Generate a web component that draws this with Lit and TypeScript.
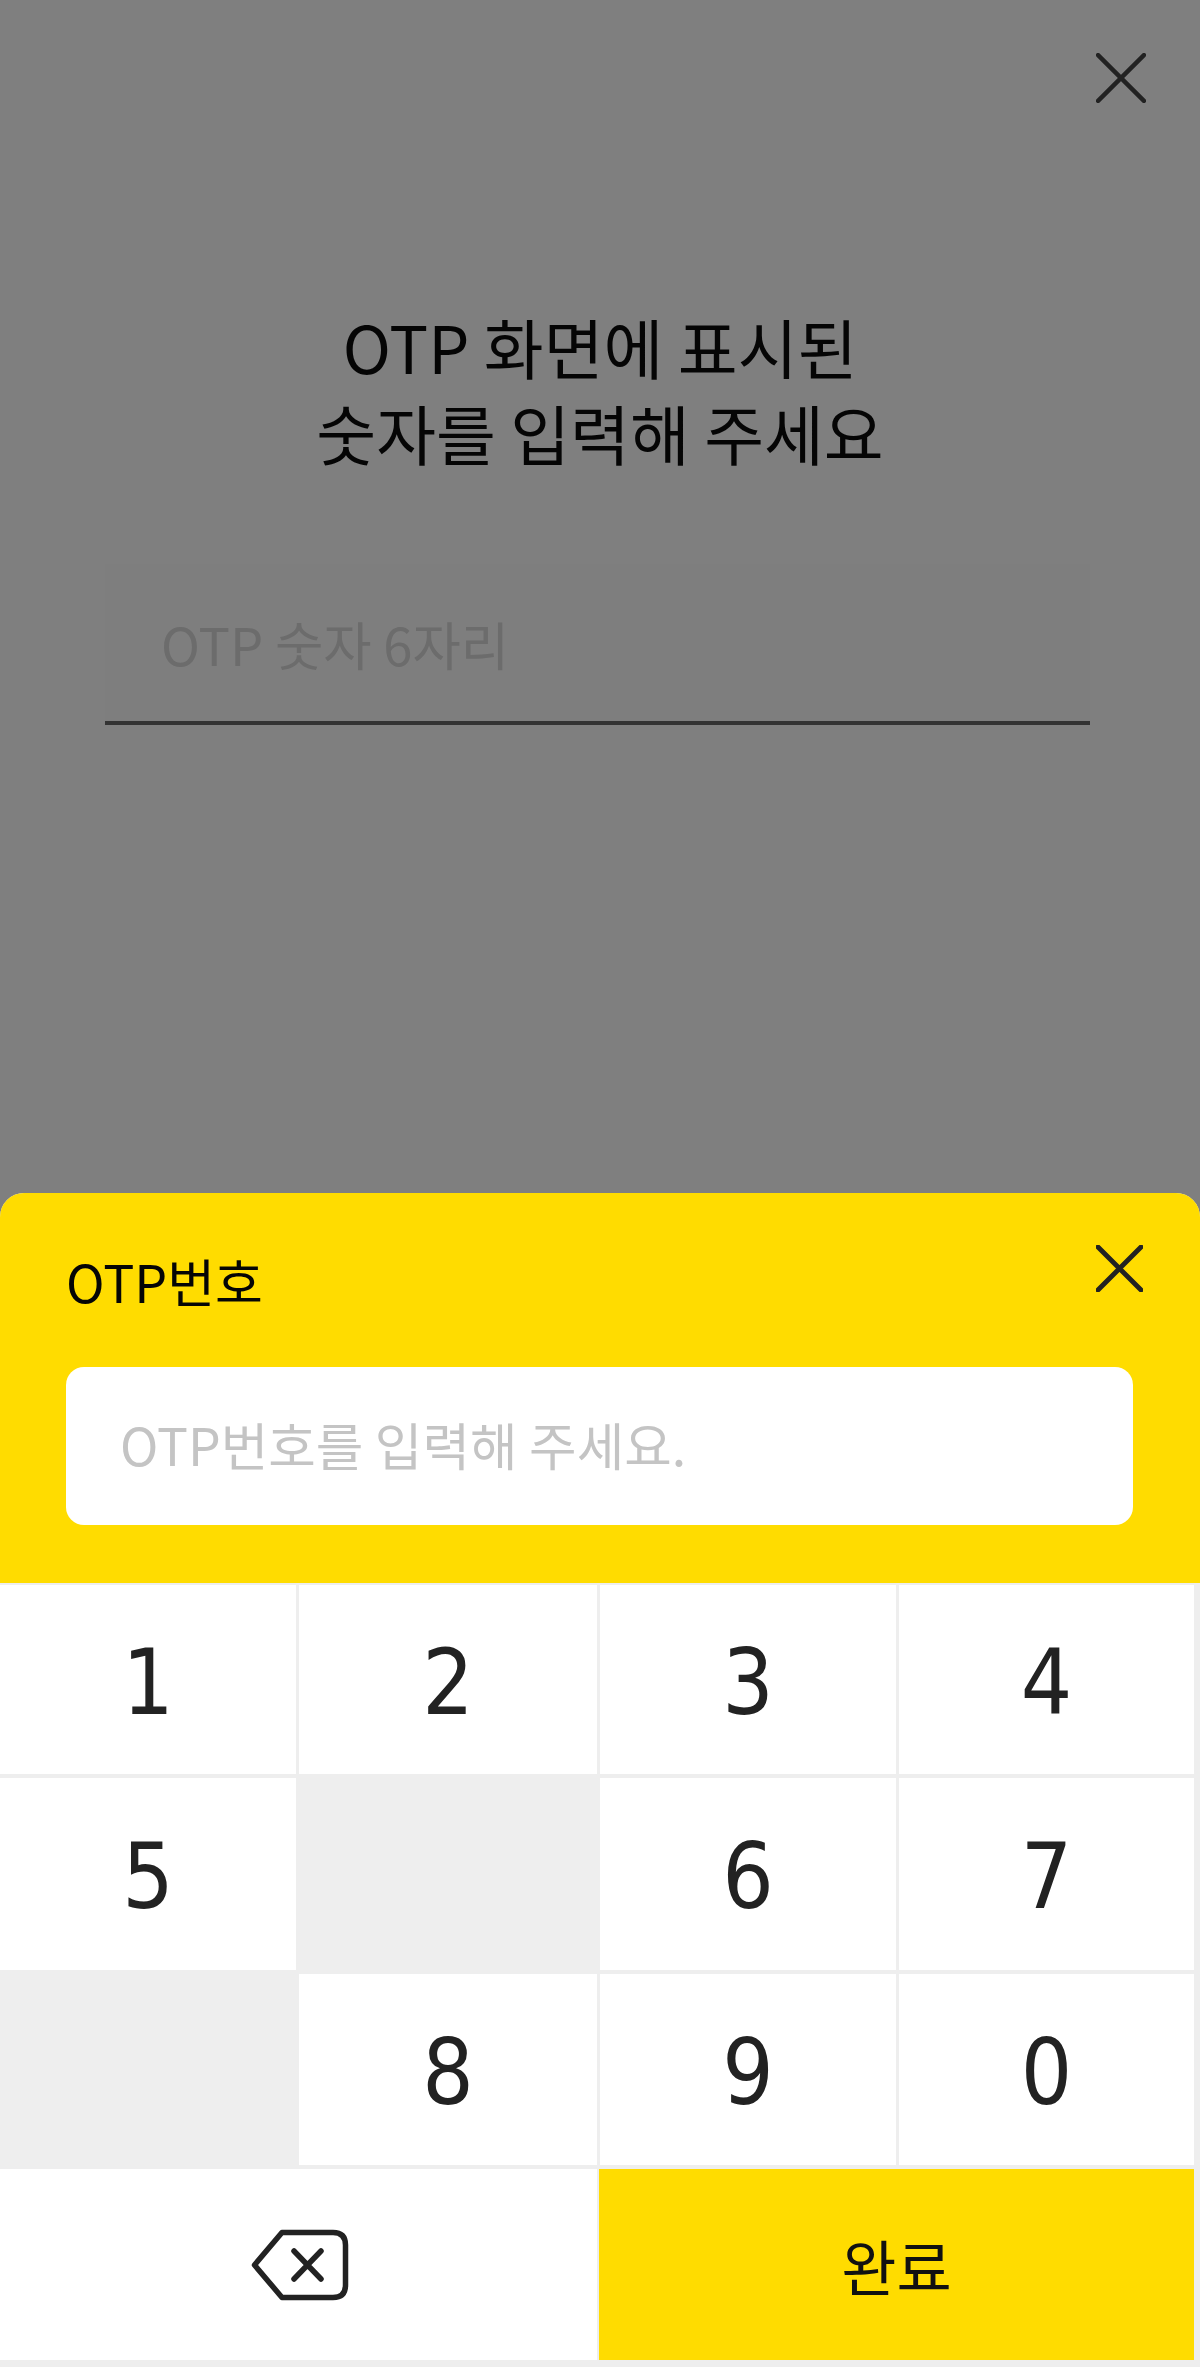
import { LitElement, html, css } from 'lit';
import { customElement } from 'lit/decorators.js';

const closeIcon = (size: number, stroke: number) => html`
  <svg width=${size} height=${size} viewBox="0 0 48 48" fill="none" stroke="#222" stroke-width=${stroke} stroke-linecap="round">
    <path d="M2 2 L46 46 M46 2 L2 46" />
  </svg>
`;

// null = blank key
const KEYS: (string | null)[] = ['1', '2', '3', '4', '5', null, '6', '7', null, '8', '9', '0'];

@customElement('app-root')
export class AppRoot extends LitElement {
  static styles = css`
    :host {
      display: block;
      width: 1200px;
      height: 2367px;
      background: #7f7f7f;
      font-family: 'Noto Sans CJK KR', 'Noto Sans', sans-serif;
      color: #111;
      overflow: hidden;
    }

    .dim {
      height: 1193px;
      box-sizing: border-box;
      display: flex;
      flex-direction: column;
      padding-top: 53px;
    }

    .top-close {
      align-self: flex-end;
      margin-right: 54px;
      height: 50px;
      line-height: 0;
    }

    h1 {
      margin: 200px 0 0;
      font-size: 65px;
      font-weight: 400;
      line-height: 86px;
      text-align: center;
      color: #050505;
    }

    .otp-field {
      margin: 89px 110px 0 105px;
      height: 161px;
      box-sizing: border-box;
      padding-left: 56px;
      display: flex;
      align-items: center;
      background: #7e7e7e;
      border-bottom: 4px solid #333;
      font-size: 52.5px;
      color: #6c6c6c;
    }

    .sheet {
      height: 1174px;
      background: #eeeeee;
      border-radius: 24px 24px 0 0;
      overflow: hidden;
    }

    .yellow {
      height: 390px;
      box-sizing: border-box;
      background: #ffdc00;
      padding: 52px 67px 0 66px;
    }

    .sheet-head {
      display: flex;
      justify-content: space-between;
      align-items: flex-start;
      height: 122px;
    }

    .sheet-title {
      font-size: 52px;
      line-height: 72px;
      color: #050505;
    }

    .sheet-close {
      margin-right: -10px;
      line-height: 0;
    }

    .input {
      height: 158px;
      border-radius: 18px;
      background: #fff;
      box-sizing: border-box;
      padding: 0 0 5px 54px;
      display: flex;
      align-items: center;
      font-size: 51.7px;
      color: #c4c4c4;
    }

    .keys {
      display: grid;
      grid-template-columns: 296px 298px 296px 295px;
      grid-template-rows: 189px 192px 191px;
      gap: 4px 3px;
      padding-top: 2px;
    }

    .key {
      background: #fff;
      display: flex;
      align-items: center;
      justify-content: center;
      padding-top: 6px;
      box-sizing: border-box;
      font-family: 'DejaVu Sans', sans-serif;
      font-stretch: condensed;
      font-size: 90px;
      line-height: 1;
      color: #222;
    }

    .key.blank {
      background: #eeeeee;
    }

    .actions {
      display: grid;
      grid-template-columns: 597px 595px;
      gap: 2px;
      margin-top: 4px;
      height: 191px;
    }

    .backspace {
      background: #fff;
      display: flex;
      align-items: center;
      justify-content: center;
    }

    .backspace svg {
      margin-left: 3px;
    }

    .done {
      background: #ffdc00;
      display: flex;
      align-items: center;
      justify-content: center;
      font-size: 60px;
      color: #111;
    }
  `;

  render() {
    return html`
      <div class="dim">
        <div class="top-close">${closeIcon(50, 4.2)}</div>
        <h1>OTP 화면에 표시된<br />숫자를 입력해 주세요</h1>
        <div class="otp-field">OTP 숫자 6자리</div>
      </div>
      <div class="sheet">
        <div class="yellow">
          <div class="sheet-head">
            <div class="sheet-title">OTP번호</div>
            <div class="sheet-close">${closeIcon(47, 5)}</div>
          </div>
          <div class="input">OTP번호를 입력해 주세요.</div>
        </div>
        <div class="keys">
          ${KEYS.map((k) => html`<div class="key ${k === null ? 'blank' : ''}">${k ?? ''}</div>`)}
        </div>
        <div class="actions">
          <div class="backspace">
            <svg width="100" height="74" viewBox="0 0 100 74" fill="none" stroke="#222" stroke-width="5.5" stroke-linecap="round" stroke-linejoin="round">
              <path d="M32 4.5 H83 Q95.5 4.5 95.5 17 V57 Q95.5 69.5 83 69.5 H32 L4.5 37 Z" />
              <path d="M44 23 L71 51 M71 23 L44 51" />
            </svg>
          </div>
          <div class="done">완료</div>
        </div>
      </div>
    `;
  }
}

declare global {
  interface HTMLElementTagNameMap {
    'app-root': AppRoot;
  }
}
